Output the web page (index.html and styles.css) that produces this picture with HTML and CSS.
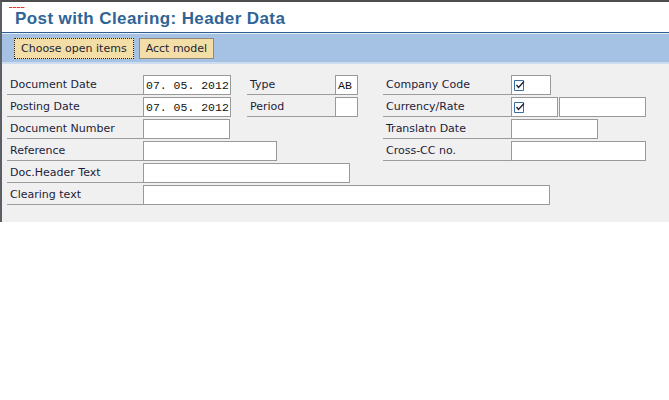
FILE: index.html
```html
<!DOCTYPE html>
<html lang="en">
<head>
    <meta charset="UTF-8">
    <title>Post with Clearing: Header Data</title>
    <link rel="stylesheet" href="styles.css">
</head>
<body>
    <div class="window">
        <div class="title-bar">
            <span class="flag"></span>
            <h1 class="title">Post with Clearing: Header Data</h1>
        </div>
        <div class="toolbar">
            <button class="btn focus">Choose open items</button>
            <button class="btn">Acct model</button>
        </div>
        <div class="screen">
            <div class="form">
                <!-- row 1 -->
                <div class="label r1 c1">Document Date</div>
                <div class="field mono w88 r1 c2">07. 05. 2012</div>
                <div class="label r1 c3">Type</div>
                <div class="field mono w23 r1 c4">AB</div>
                <div class="label r1 c5">Company Code</div>
                <div class="field w40 r1 c6"><svg class="check" width="11" height="11" viewBox="0 0 11 11"><path d="M0.5 0.5H9.5V10.5H0.5Z" fill="#fff" stroke="#3a6d9e"/><path d="M2.5 5L4.5 7.5L10 1.5" fill="none" stroke="#1b2238" stroke-width="1.3"/></svg></div>

                <!-- row 2 -->
                <div class="label r2 c1">Posting Date</div>
                <div class="field mono w88 r2 c2">07. 05. 2012</div>
                <div class="label r2 c3">Period</div>
                <div class="field w23 r2 c4"></div>
                <div class="label r2 c5">Currency/Rate</div>
                <div class="pair r2 c6">
                    <div class="field w47"><svg class="check" width="11" height="11" viewBox="0 0 11 11"><path d="M0.5 0.5H9.5V10.5H0.5Z" fill="#fff" stroke="#3a6d9e"/><path d="M2.5 5L4.5 7.5L10 1.5" fill="none" stroke="#1b2238" stroke-width="1.3"/></svg></div>
                    <div class="field w87"></div>
                </div>

                <!-- row 3 -->
                <div class="label r3 c1">Document Number</div>
                <div class="field w87 r3 c2"></div>
                <div class="label r3 c5">Translatn Date</div>
                <div class="field w87 r3 c6"></div>

                <!-- row 4 -->
                <div class="label r4 c1">Reference</div>
                <div class="field w134 r4 c2"></div>
                <div class="label r4 c5">Cross-CC no.</div>
                <div class="field w135 r4 c6"></div>

                <!-- row 5 -->
                <div class="label r5 c1">Doc.Header Text</div>
                <div class="field w207 r5 span-mid"></div>

                <!-- row 6 -->
                <div class="label r6 c1">Clearing text</div>
                <div class="field w407 r6 span-all"></div>
            </div>
        </div>
    </div>
</body>
</html>
```

FILE: styles.css
```css
body {
    margin: 0;
    background-color: #fff;
    font-family: "DejaVu Sans", Verdana, sans-serif;
}
.window {
    border-top: 2px solid #4d4d4d;
    border-left: 2px solid #5a5f66;
}
.title-bar {
    position: relative;
    height: 23px;
    padding: 7px 0 0 13px;
    background-color: #fff;
    border-bottom: 1px solid #2d5e8e;
}
.title-bar .flag {
    position: absolute;
    top: 5px;
    left: 7px;
    width: 16px;
    height: 1px;
    background: repeating-linear-gradient(90deg, #e8342a 0 3px, #f7b0a8 3px 4px);
}
.title {
    margin: 0;
    font-family: "Liberation Sans", Arial, sans-serif;
    font-size: 17px;
    line-height: 20px;
    letter-spacing: 0.4px;
    font-weight: bold;
    color: #2f6496;
}
.toolbar {
    height: 24px;
    padding: 4px 0 0 12px;
    background-color: #a5c2e5;
    border-top: 1px solid #e3ecf7;
    border-bottom: 2px solid #cddcf0;
    display: flex;
    gap: 5px;
}
.btn {
    height: 21px;
    padding: 0 6px;
    font-family: "DejaVu Sans", Verdana, sans-serif;
    font-size: 11px;
    color: #1e1e30;
    background-color: #f4dea8;
    border: 1px solid #8f8a78;
    border-radius: 0;
    cursor: pointer;
}
.btn.focus {
    border: 1px dotted #222;
}
.screen {
    height: 147px;
    padding: 11px 0 0 5px;
    background-color: #f0f0f0;
}
.form {
    display: grid;
    grid-template-columns: 136px 104px 88px 48px 128px 1fr;
    grid-auto-rows: 20px;
    row-gap: 2px;
}
.label {
    padding: 1px 0 0 3px;
    font-size: 11px;
    line-height: 18px;
    color: #1c1c3a;
    border-bottom: 1px solid #9c9c9c;
    white-space: nowrap;
}
.field {
    box-sizing: border-box;
    height: 20px;
    justify-self: start;
    background-color: #fff;
    border: 1px solid #999;
    display: flex;
    align-items: center;
}
.field .check {
    margin-left: 2px;
}
.mono {
    padding-left: 2px;
    font-family: "Liberation Mono", "Courier New", monospace;
    font-size: 11.5px;
    white-space: nowrap;
    overflow: hidden;
    color: #111;
}
.pair {
    display: flex;
    gap: 1px;
}
.r1 { grid-row: 1; }
.r2 { grid-row: 2; }
.r3 { grid-row: 3; }
.r4 { grid-row: 4; }
.r5 { grid-row: 5; }
.r6 { grid-row: 6; }
.c1 { grid-column: 1; }
.c2 { grid-column: 2; }
.c3 { grid-column: 3; }
.c4 { grid-column: 4; }
.c5 { grid-column: 5; }
.c6 { grid-column: 6; }
.span-mid { grid-column: 2 / 6; }
.span-all { grid-column: 2 / 7; }
.w23 { width: 23px; }
.w40 { width: 40px; }
.w47 { width: 47px; }
.w87 { width: 87px; }
.w88 { width: 88px; }
.w134 { width: 134px; }
.w135 { width: 135px; }
.w207 { width: 207px; }
.w407 { width: 407px; }
```
